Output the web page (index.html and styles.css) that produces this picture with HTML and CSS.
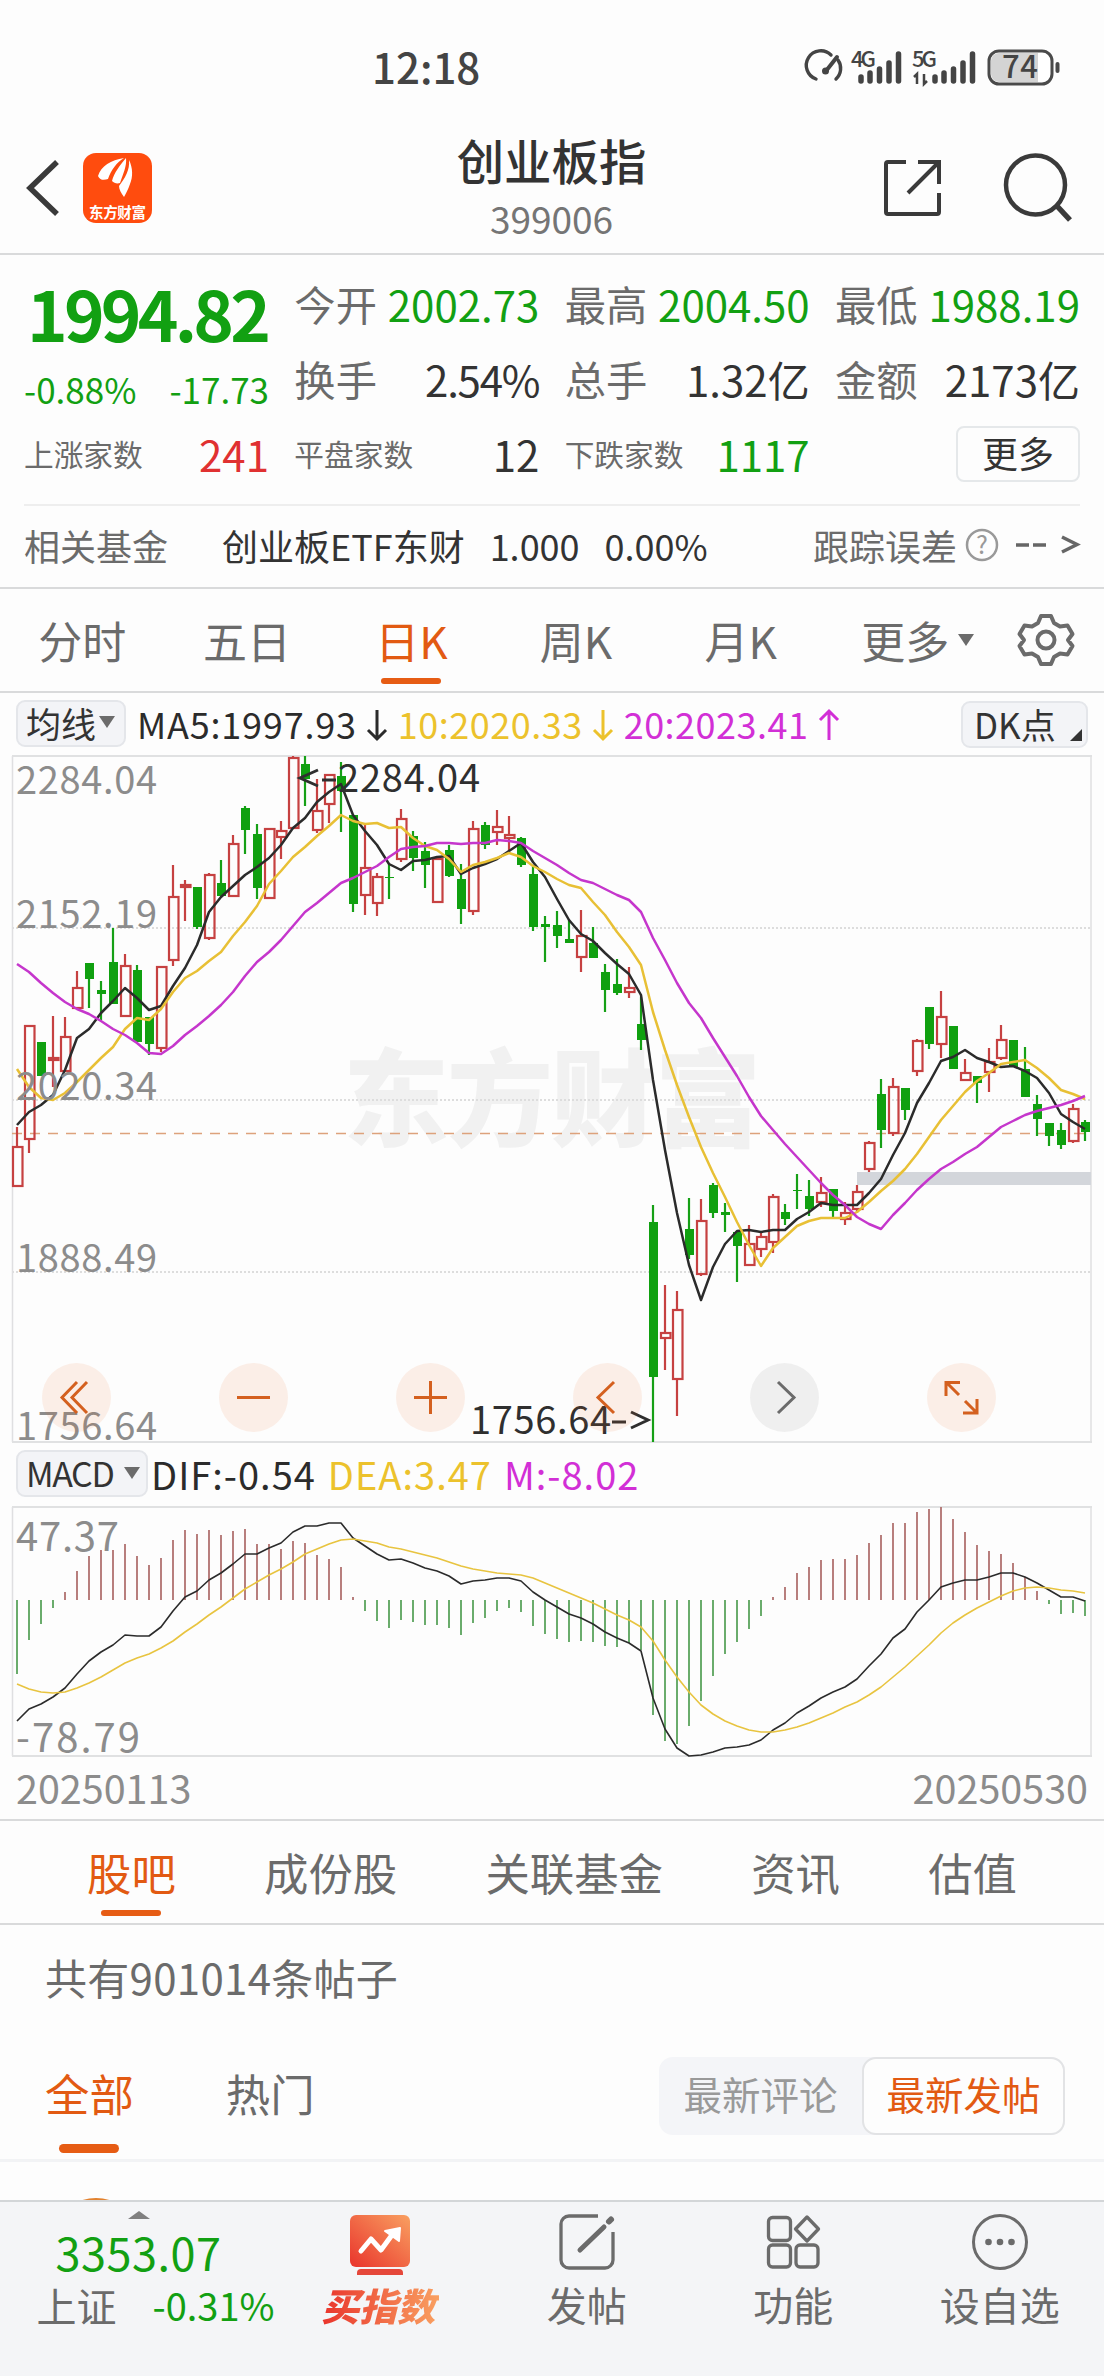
FILE: index.html
```html
<!DOCTYPE html>
<html lang="zh-CN">
    <head>
        <meta charset="utf-8">
        <title>创业板指 399006</title>
        <link rel="stylesheet" href="styles.css">
    </head>
    <body>
        <div class="status">
            <span class="clock">12:18</span>
            <svg class="status-icons" width="262" height="44" viewBox="800 46 262 44">
                <g fill="none" stroke="#444" stroke-width="3.4" stroke-linecap="round">
                    <path d="M812 79a14.500 14.500 0 1 1 15-24M834 60a14.500 14.500 0 0 1-2 19" transform="translate(4 0)"/>
                    <path d="M837 57l-11 14" stroke-width="4"/>
                </g>
                <circle cx="825.500" cy="71" r="3.500" fill="#444"/>
                <g class="net">
                    <text x="851" y="67" textLength="25">4G</text>
                    <text x="912" y="67" textLength="25">5G</text>
                </g>
                <g stroke="#444" stroke-width="5.500" stroke-linecap="round">
                    <path d="M861 77v4M870 73v8M879.500 69v12M889 63v18M898.500 54v27"/>
                    <path d="M935 77v4M944 73v8M953.500 69v12M963 63v18M972.500 54v27"/>
                </g>
                <path d="M914 77l3-3v10M924 74v10l3-3" fill="none" stroke="#444" stroke-width="2.500"/>
                <rect x="989" y="51" width="63" height="33" rx="10" fill="#fff" stroke="#4a4a4a" stroke-width="3"/>
                <path d="M999 53h39v29h-39a8 8 0 0 1-8-8v-13a8 8 0 0 1 8-8z" fill="#d4d4d4"/>
                <path d="M1057.500 64v7" stroke="#4a4a4a" stroke-width="4" stroke-linecap="round"/>
                <text class="battery" x="1002" y="78" textLength="36">74</text>
            </svg>
        </div>

        <header class="header">
            <div class="header-left">
                <svg width="36" height="60" viewBox="0 0 36 60"><path d="M33 4L6 30l27 26" fill="none" stroke="#3a3a3a" stroke-width="5.500"/></svg>
                <svg class="logo" width="69" height="70" viewBox="0 0 69 70">
                    <rect width="69" height="70" rx="13" fill="#ff4c0e"/>
                    <path d="M15 23C18 13 28 7 41 5c-7 4-13 12-16 21-3 1-8 2-10-3z" fill="#fff"/>
                    <path d="M43 5c-6 7-12 15-14 23 2 2 5 3 8 2 3-9 7-17 6-25z" fill="#fff"/>
                    <path d="M46 7c4 8 4 17 1 24-2 6-4 9-6 13-3-4-5-8-5-11 6-8 11-16 10-26z" fill="#fff"/>
                    <text x="6" y="65" textLength="57">东方财富</text>
                </svg>
            </div>
            <div class="header-title">
                <h1>创业板指</h1>
                <p>399006</p>
            </div>
            <div class="header-right">
                <svg width="60" height="60" viewBox="0 0 60 60" fill="none" stroke="#3a3a3a" stroke-width="4"><path d="M24 4H6a2 2 0 0 0-2 2v48a2 2 0 0 0 2 2h49a2 2 0 0 0 2-2V35M36 4h21v22M57 4L26 35"/></svg>
                <svg width="72" height="72" viewBox="0 0 72 72" fill="none" stroke="#3a3a3a" stroke-width="4.500"><circle cx="33.500" cy="33" r="29.500"/><path d="M55 54l13 14" stroke-width="5.500"/></svg>
            </div>
        </header>

        <section class="quote">
            <div class="quote-grid">
                <div class="cell price down">1994.82</div>
                <div class="cell"><span>今开</span><b class="down">2002.73</b></div>
                <div class="cell"><span>最高</span><b class="down">2004.50</b></div>
                <div class="cell"><span>最低</span><b class="down">1988.19</b></div>
                <div class="cell change down"><span>-0.88%</span><span>-17.73</span></div>
                <div class="cell"><span>换手</span><b class="percent">2.54%</b></div>
                <div class="cell"><span>总手</span><b>1.32亿</b></div>
                <div class="cell"><span>金额</span><b>2173亿</b></div>
                <div class="cell small"><span>上涨家数</span><b class="up">241</b></div>
                <div class="cell small"><span>平盘家数</span><b>12</b></div>
                <div class="cell small"><span>下跌家数</span><b class="down">1117</b></div>
                <div class="cell more"><button>更多</button></div>
            </div>
            <div class="fund">
                <span class="fund-label">相关基金</span>
                <span class="fund-name">创业板ETF东财</span>
                <span class="fund-value">1.000</span>
                <span>0.00%</span>
                <span class="fund-error">跟踪误差</span>
                <svg width="34" height="34" viewBox="0 0 34 34"><circle cx="17" cy="17" r="15" fill="none" stroke="#999" stroke-width="2.500"/><text x="17" y="26" text-anchor="middle">?</text></svg>
                <svg class="fund-more" width="66" height="30" viewBox="0 0 66 30" fill="none" stroke="#666" stroke-width="3.500"><path d="M2 15h13M19 15h13M48 7l15 7.500L48 22"/></svg>
            </div>
        </section>

        <nav class="period">
            <a>分时</a>
            <a>五日</a>
            <a class="active">日K</a>
            <a>周K</a>
            <a>月K</a>
            <a>更多<i class="caret"></i></a>
            <svg width="56" height="56" viewBox="-28 -28 56 56" fill="none" stroke="#6b6b6b" stroke-width="4" stroke-linejoin="round">
                <path d="M-5-24H5L8-17l6 3.500 7.500-1 5 8.500-4.500 6 4.500 6-5 8.500-7.500-1L8 17 5 24H-5L-8 17l-6-3.500-7.500 1-5-8.500 4.500-6-4.500-6 5-8.500 7.500 1L-8-17z"/>
                <circle r="8.500"/>
            </svg>
        </nav>

        <div class="indicator ma">
            <span class="chip">均线<i class="caret"></i></span>
            <span class="value ma5">MA5:1997.93</span>
            <svg class="arrow ma5" width="22" height="34" viewBox="0 0 22 34"><path d="M11 2v29M2 22l9 9 9-9"/></svg>
            <span class="value ma10">10:2020.33</span>
            <svg class="arrow ma10" width="22" height="34" viewBox="0 0 22 34"><path d="M11 2v29M2 22l9 9 9-9"/></svg>
            <span class="value ma20">20:2023.41</span>
            <svg class="arrow ma20" width="22" height="34" viewBox="0 0 22 34"><path d="M11 32V3M2 12l9-9 9 9"/></svg>
            <span class="chip dk">DK点<i class="corner"></i></span>
        </div>

        <div class="chart">
            <svg id="kline" width="1104" height="688" viewBox="0 755 1104 688">
                <text class="watermark" x="343" y="1138" textLength="418">东方财富</text>
                <g stroke="#ddd" stroke-width="2" stroke-dasharray="2 2">
                    <path d="M12 928H1091M12 1100H1091M12 1272H1091"/>
                </g>
                <path d="M12.500 756V1442M1091 756V1442" stroke="#dfdfe1" stroke-width="1.500"/>
                <path d="M12 756H1092M12 1442H1092" stroke="#e0e1e2" stroke-width="2"/>
                <rect x="857" y="1172" width="234" height="13" fill="#d3d6db"/>
                <path d="M12 1133.500H1091" stroke="#dda27c" stroke-width="1.300" stroke-dasharray="10 8"/>
                <g id="candles"></g>
                <g id="averages"></g>
                <g class="scale">
                    <text x="16" y="794" textLength="141">2284.04</text>
                    <text x="16" y="928" textLength="141">2152.19</text>
                    <text x="16" y="1100" textLength="141">2020.34</text>
                    <text x="16" y="1272" textLength="141">1888.49</text>
                    <text x="16" y="1440" textLength="141">1756.64</text>
                </g>
                <g class="extreme">
                    <path d="M318 770l-18 8 18 8M322 780h14"/>
                    <text x="338" y="792" textLength="142">2284.04</text>
                    <path d="M612 1422h14M631 1412l17 8-17 8"/>
                    <text x="470" y="1434" textLength="141">1756.64</text>
                </g>
            </svg>
            <div class="controls">
                <button><svg viewBox="0 0 69 69"><path d="M35 19L20 34.500 35 50M45 19L30 34.500 45 50"/></svg></button>
                <button><svg viewBox="0 0 69 69"><path d="M18 34.500h33"/></svg></button>
                <button><svg viewBox="0 0 69 69"><path d="M18 34.500h33M34.500 18v33"/></svg></button>
                <button><svg viewBox="0 0 69 69"><path d="M41 19L25 34.500 41 50"/></svg></button>
                <button class="disabled"><svg viewBox="0 0 69 69"><path d="M28 19l16 15.500L28 50"/></svg></button>
                <button><svg viewBox="0 0 69 69"><path d="M19 33V19.500h14M20 20l12 12M50 36v14H36M49 49L38 38"/></svg></button>
            </div>
        </div>

        <div class="indicator macd">
            <span class="chip">MACD<i class="caret"></i></span>
            <span class="ma5">DIF:-0.54</span>
            <span class="ma10">DEA:3.47</span>
            <span class="ma20">M:-8.02</span>
        </div>

        <svg id="macd" width="1104" height="251" viewBox="0 1506 1104 251">
            <path d="M12.500 1507V1756M1091 1507V1756" stroke="#dfdfe1" stroke-width="1.500"/>
            <path d="M12 1507H1092M12 1756H1092" stroke="#e0e1e2" stroke-width="2"/>
            <g class="scale">
                <text x="16" y="1551" textLength="103">47.37</text>
                <text x="16" y="1752" textLength="124">-78.79</text>
            </g>
            <g id="bars"></g>
        </svg>
        <div class="dates"><span>20250113</span><span>20250530</span></div>

        <nav class="topics">
            <a class="active">股吧</a>
            <a>成份股</a>
            <a>关联基金</a>
            <a>资讯</a>
            <a>估值</a>
        </nav>

        <section class="posts">
            <p class="count">共有901014条帖子</p>
            <div class="filter">
                <a class="active">全部</a>
                <a>热门</a>
                <div class="sort"><span>最新评论</span><span class="selected">最新发帖</span></div>
            </div>
            <div class="post"><div class="avatar"></div></div>
        </section>

        <footer class="toolbar">
            <div class="market">
                <i class="expand"></i>
                <b>3353.07</b>
                <div><span>上证</span><em>-0.31%</em></div>
            </div>
            <div class="tool buy">
                <svg width="62" height="62" viewBox="0 0 62 62">
                    <defs><linearGradient id="fire" x1="0" y1="1" x2="1" y2="0"><stop offset="0" stop-color="#e9342c"/><stop offset="1" stop-color="#f9a061"/></linearGradient></defs>
                    <rect x="1" y="2" width="60" height="52" rx="6" fill="url(#fire)"/>
                    <path d="M8 60a4 4 0 0 1 4-4h38a4 4 0 0 1 4 4v2H8z" fill="#e5473a"/>
                    <path d="M12 38l10-12 10 11 11-15" fill="none" stroke="#fff" stroke-width="5" stroke-linejoin="round" stroke-linecap="round"/>
                    <path d="M36 18l15-3-1 13z" fill="#fff" stroke="#fff" stroke-width="2" stroke-linejoin="round"/>
                </svg>
                <span>买指数</span>
            </div>
            <div class="tool">
                <svg width="62" height="62" viewBox="0 0 62 62" fill="none" stroke="#6b6b6b" stroke-width="3.300"><path d="M42 3H13a8 8 0 0 0-8 8v36a8 8 0 0 0 8 8h36a8 8 0 0 0 8-8V19"/><path d="M48 14L24 37" stroke-width="5" stroke-linecap="round"/><path d="M53 8.500L55 6.500" stroke-width="6" stroke-linecap="round"/></svg>
                <span>发帖</span>
            </div>
            <div class="tool">
                <svg width="62" height="62" viewBox="0 0 62 62" fill="none" stroke="#6b6b6b" stroke-width="3.300"><rect x="6.500" y="4.500" width="22" height="23" rx="4"/><rect x="6.500" y="32" width="22" height="22" rx="4"/><rect x="34" y="32" width="22" height="22" rx="4"/><path d="M45 4L56.500 16 45 28 33.500 16z" stroke-linejoin="round"/></svg>
                <span>功能</span>
            </div>
            <div class="tool">
                <svg width="62" height="62" viewBox="0 0 62 62"><circle cx="31" cy="29" r="26.500" fill="none" stroke="#6b6b6b" stroke-width="3"/><g fill="#6b6b6b"><circle cx="19.500" cy="29" r="3.300"/><circle cx="31" cy="29" r="3.300"/><circle cx="42.500" cy="29" r="3.300"/></g></svg>
                <span>设自选</span>
            </div>
        </footer>
        <script src="chart.js"></script>
    </body>
</html>
```

FILE: styles.css
```css
* {
    box-sizing: border-box;
}
html, body {
    margin: 0;
    padding: 0;
}
body {
    width: 1104px;
    height: 2376px;
    overflow: hidden;
    display: flex;
    flex-direction: column;
    background: #fdfdfd;
    color: #333;
    font-family: "Noto Sans CJK SC", sans-serif;
    font-size: 36px;
    line-height: 1;
}
h1, p {
    margin: 0;
}
svg {
    display: block;
    flex: none;
    overflow: visible;
}
button {
    font-family: inherit;
    padding: 0;
}
b, em, i {
    font-weight: 400;
    font-style: normal;
}
span, a, b {
    white-space: nowrap;
}
.down {
    color: #12a012;
}
.up {
    color: #e03131;
}

.status {
    height: 104px;
    padding: 46px 42px 0 372px;
    display: flex;
    justify-content: space-between;
}
.clock {
    margin-top: -1px;
    font-size: 42px;
    font-weight: 500;
    color: #444;
}
.net {
    font: 500 22px "Noto Sans CJK SC", sans-serif;
    fill: #444;
}
.battery {
    font: 500 31px "Noto Sans CJK SC", sans-serif;
    fill: #444;
}

.header {
    height: 151px;
    padding: 0 30px 0 24px;
    display: grid;
    grid-template-columns: 1fr auto 1fr;
    border-bottom: 2px solid #d9dadb;
}
.header-left, .header-right {
    display: flex;
    align-items: center;
    padding-top: 18px;
}
.header-left {
    gap: 23px;
}
.header-right {
    justify-content: flex-end;
    gap: 60px;
}
.logo text {
    font: 700 14.5px "Noto Sans CJK SC", sans-serif;
    fill: #fff;
}
.header-title {
    text-align: center;
    padding: 32px 0 0 5px;
}
.header-title h1 {
    font-size: 47.4px;
    font-weight: 500;
}
.header-title p {
    margin-top: 17px;
    font-size: 37px;
    color: #757575;
}

.quote {
    height: 334px;
    padding: 0 24px;
    border-bottom: 2px solid #d9dadb;
}
.quote-grid {
    height: 251px;
    padding-top: 12px;
    border-bottom: 2px solid #eee;
    display: grid;
    grid-template-columns: repeat(4, 245px);
    grid-template-rows: repeat(3, 75px);
    justify-content: space-between;
}
.cell {
    display: flex;
    align-items: center;
    justify-content: space-between;
    font-size: 41.3px;
    padding-bottom: 2px;
}
.cell span {
    color: #6b6b6b;
}
.cell b {
    font-size: 42px;
}
.cell .percent {
    letter-spacing: -1.2px;
}
.cell.price {
    font-size: 69px;
    font-weight: 700;
    letter-spacing: -3.8px;
    padding: 16px 0 0 3px;
}
.cell.change {
    font-size: 35px;
    padding-top: 19px;
}
.cell.change span {
    color: inherit;
}
.cell.small {
    font-size: 29.7px;
    padding-bottom: 1px;
}
.cell.more {
    justify-content: flex-end;
}
.cell.more button {
    width: 124px;
    height: 56px;
    border: 2px solid #e5e8ea;
    border-radius: 8px;
    background: #fdfdfd;
    color: #333;
    font-size: 36px;
    line-height: 46px;
    padding-bottom: 4px;
}
.fund {
    height: 78px;
    display: flex;
    align-items: center;
}
.fund-label {
    width: 198px;
    color: #6b6b6b;
}
.fund-value {
    margin: 0 25px;
}
.fund-error {
    margin: 0 8px 0 auto;
    color: #6b6b6b;
}
.fund text {
    font-size: 25px;
    fill: #999;
}
.fund-more {
    margin-left: 15px;
}

.caret {
    width: 0;
    height: 0;
    border: 8px solid transparent;
    border-top: 12px solid #6b6b6b;
    border-bottom: 0;
}
.period {
    height: 104px;
    border-bottom: 2px solid #d9dadb;
    display: grid;
    grid-template-columns: repeat(6, 164.6px) 1fr;
    align-items: center;
    justify-items: center;
    font-size: 44px;
    color: #6b6b6b;
}
.period a, .topics a, .filter a {
    height: 100%;
    display: flex;
    align-items: center;
    position: relative;
}
.period .caret {
    margin: 0 -25px 0 9px;
}
.active {
    color: #e25a12;
}
/* short bar under the selected tab */
.active::after {
    content: "";
    position: absolute;
    left: 50%;
    bottom: 7px;
    width: 60px;
    height: 6px;
    margin-left: -30px;
    border-radius: 3px;
    background: #e65c14;
}

.indicator {
    display: flex;
    align-items: center;
    padding: 0 16px;
}
.ma {
    height: 62px;
    padding-bottom: 2px;
}
.macd {
    height: 63px;
    padding-bottom: 2px;
    font-size: 38px;
}
.chip {
    height: 47px;
    border: 2px solid #e4e6ea;
    border-radius: 9px;
    background: #f3f4f7;
    display: flex;
    align-items: center;
    color: #333;
    padding-bottom: 2px;
    position: relative;
}
.ma .chip {
    width: 110px;
    padding-left: 8px;
    margin-right: 11px;
    font-size: 35px;
}
.ma .chip.dk {
    width: 127px;
    padding-left: 11px;
    margin: 2px 0 0 auto;
}
.macd .chip {
    width: 132px;
    padding-left: 8px;
    margin-right: 3px;
    font-size: 34px;
    letter-spacing: -1.4px;
}
.ma .chip .caret {
    margin-left: 3px;
}
.macd .chip .caret {
    margin-left: 11px;
}
.corner {
    position: absolute;
    right: 4px;
    bottom: 5px;
    border-left: 12px solid transparent;
    border-bottom: 12px solid #333;
}
.ma5 { color: #2b2b2b; }
.ma10 { color: #ecc22c; }
.ma20 { color: #d22fd6; }
.value {
    letter-spacing: 0.5px;
}
.value.ma5 {
    letter-spacing: 0.8px;
}
.arrow {
    margin: 3px 10px 0 9px;
    fill: none;
    stroke: currentColor;
    stroke-width: 3;
}
.macd span + span {
    margin-right: 12px;
    letter-spacing: 1px;
}

.chart {
    height: 688px;
    position: relative;
}
.watermark {
    font: 900 106px "Noto Sans CJK SC", sans-serif;
    fill: #f1f1f1;
}
.scale text {
    font-size: 38px;
    fill: #8c8c8c;
}
#macd .scale text {
    font-size: 40px;
}
.extreme {
    font-size: 38px;
    fill: #2f2f2f;
}
.extreme path {
    fill: none;
    stroke: #2f2f2f;
    stroke-width: 3;
}
/* buttons float over the candles */
.controls {
    position: absolute;
    left: 42px;
    bottom: 11px;
    display: flex;
    gap: 108px;
}
.controls button {
    width: 69px;
    height: 69px;
    border: 0;
    border-radius: 50%;
    background: rgba(240, 105, 40, 0.1);
}
.controls path {
    fill: none;
    stroke: #d4601f;
    stroke-width: 3;
}
.controls .disabled {
    background: rgba(100, 100, 100, 0.09);
}
.controls .disabled path {
    stroke: #6b6b6b;
}
.dates {
    height: 64px;
    padding: 0 16px 2px;
    border-bottom: 2px solid #d9dadb;
    display: flex;
    align-items: center;
    justify-content: space-between;
    font-size: 39.5px;
    color: #8c8c8c;
}

.topics {
    height: 104px;
    padding: 0 87px;
    border-bottom: 2px solid #d9dadb;
    display: flex;
    justify-content: space-between;
    font-size: 44.4px;
    color: #6b6b6b;
}

.posts {
    height: 275px;
    overflow: hidden;
    flex: none;
}
.count {
    padding: 31px 0 0 45px;
    font-size: 42px;
    letter-spacing: 0.3px;
    color: #6b6b6b;
}
.filter {
    height: 102px;
    margin-top: 59px;
    padding: 0 39px 0 45px;
    display: flex;
    gap: 92px;
    font-size: 44.4px;
    color: #6b6b6b;
}
.filter a {
    height: 73px;
}
.filter .active::after {
    bottom: -23px;
    height: 9px;
    border-radius: 5px;
}
.sort {
    height: 78px;
    margin-left: auto;
    display: flex;
    background: #f4f5f8;
    border-radius: 14px;
    font-size: 38.5px;
    color: #999;
}
.sort span {
    width: 203px;
    line-height: 73px;
    text-align: center;
}
.sort .selected {
    height: 78px;
    line-height: 69px;
    border: 2px solid #e2e3e5;
    border-radius: 14px;
    background: #fdfdfd;
    color: #e25a12;
}
.post {
    border-top: 3px solid #f2f3f5;
    padding: 36px 50px;
}
.avatar {
    width: 92px;
    height: 92px;
    border-radius: 50%;
    background: #e2822f;
}

.toolbar {
    height: 176px;
    flex: none;
    border-top: 2px solid #d3d6d8;
    background: #f4f5f7;
    display: flex;
    color: #6b6b6b;
    font-size: 40px;
}
.market {
    width: 277px;
    display: flex;
    flex-direction: column;
    align-items: center;
    color: #12a012;
}
.expand {
    margin-top: 9px;
    border: 11px solid transparent;
    border-bottom: 8px solid #808080;
    border-top: 0;
}
.market b {
    margin-top: 10px;
    font-size: 45px;
    letter-spacing: 0.5px;
}
.market div {
    width: 238px;
    margin: 11px 0 0 34px;
    display: flex;
    align-items: center;
    justify-content: space-between;
}
.market span {
    color: #6b6b6b;
}
.market em {
    font-size: 38px;
}
.tool {
    width: 206.5px;
    padding-top: 11px;
    display: flex;
    flex-direction: column;
    align-items: center;
    gap: 9px;
}
.buy span {
    font-size: 38px;
    font-weight: 900;
    font-style: italic;
    background: linear-gradient(90deg, #e9342c, #f9a061);
    -webkit-background-clip: text;
    background-clip: text;
    color: transparent;
    padding: 2px 4px 2px 0;
}
```

FILE: chart.js
```js
const STEP = 12;
const FIRST = 17;
const x = i => FIRST + i * STEP;

// [direction, high, body top, body bottom, low]
const candles = [
    ["r",1127,1147,1186,1186], ["r",1025,1026,1139,1153], ["g",1042,1042,1076,1076], ["r",1016,1058,1060,1087], ["r",1017,1037,1071,1071],
    ["r",971,988,1008,1008], ["g",963,963,979,1008], ["g",981,990,994,1020], ["g",928,962,1004,1004], ["r",954,966,1016,1016],
    ["g",965,970,1042,1042], ["g",1017,1017,1044,1055], ["r",967,967,1048,1052], ["r",865,897,960,966], ["r",880,885,887,921],
    ["g",887,887,927,929], ["r",873,875,938,940], ["g",860,883,896,896], ["r",835,844,896,896], ["g",806,808,830,854],
    ["g",824,834,888,899], ["r",828,829,898,898], ["r",821,831,837,859], ["r",756,758,828,828], ["g",756,764,779,806],
    ["r",779,811,830,833], ["r",774,775,804,823], ["g",762,776,791,832], ["g",815,815,904,912], ["r",823,868,895,915],
    ["r",873,877,903,916], ["g",865,877,878,899], ["r",809,819,859,862], ["g",831,836,858,871], ["g",842,851,865,888],
    ["r",858,859,902,902], ["g",845,850,876,877], ["g",864,879,909,924], ["r",821,829,911,915], ["g",822,825,845,849],
    ["r",810,827,832,845], ["r",816,835,838,852], ["g",837,838,865,867], ["g",865,874,927,931], ["g",916,924,927,962],
    ["g",911,925,936,948], ["g",920,939,943,943], ["r",910,936,957,972], ["g",927,943,958,958], ["g",964,972,990,1012],
    ["g",959,984,993,995], ["r",967,988,992,998], ["g",997,1024,1040,1050], ["g",1205,1222,1377,1442], ["r",1285,1333,1338,1370],
    ["r",1291,1310,1379,1416], ["g",1198,1229,1255,1259], ["r",1199,1221,1274,1276], ["g",1183,1185,1213,1218], ["g",1203,1212,1215,1232],
    ["g",1232,1232,1246,1282], ["r",1225,1244,1265,1265], ["r",1233,1237,1249,1257], ["r",1194,1197,1242,1253], ["g",1204,1212,1219,1225],
    ["g",1174,1190,1191,1209], ["g",1180,1196,1209,1216], ["r",1177,1193,1202,1207], ["g",1189,1189,1211,1217], ["r",1202,1213,1219,1225],
    ["r",1185,1192,1209,1213], ["r",1141,1143,1169,1172], ["g",1079,1094,1130,1148], ["r",1078,1087,1133,1136], ["g",1088,1088,1110,1120],
    ["r",1039,1041,1071,1076], ["g",1007,1007,1044,1049], ["r",991,1017,1044,1058], ["g",1026,1026,1069,1069], ["r",1059,1073,1080,1080],
    ["g",1076,1076,1083,1103], ["r",1048,1062,1072,1092], ["r",1025,1040,1058,1060], ["g",1040,1040,1067,1067], ["g",1047,1069,1097,1097],
    ["g",1095,1104,1119,1136], ["g",1123,1123,1136,1146], ["g",1123,1130,1145,1149], ["r",1104,1109,1141,1143], ["g",1120,1122,1132,1141]
];

const ma5 = [1125,1112,1105,1095,1070,1038,1029,1013,1001,988,998,1010,1006,986,968,945,912,897,886,875,867,858,845,828,818,802,792,784,815,831,
    845,864,870,861,860,857,856,874,868,864,859,851,843,862,877,899,920,934,941,953,964,974,995,1080,1150,1213,1265,1300,1267,1244,
    1231,1230,1232,1230,1230,1219,1212,1203,1205,1205,1205,1193,1179,1155,1133,1103,1083,1061,1057,1050,1058,1062,1067,1066,1071,1078,1093,1114,1122,1129];
const ma10 = [1069,1087,1098,1100,1093,1082,1070,1058,1047,1029,1018,1020,1009,992,978,971,961,952,936,922,906,884,871,857,847,836,826,815,821,824,
    823,828,827,838,846,850,859,872,865,862,858,853,857,866,872,879,885,888,902,915,932,947,965,1012,1050,1085,1117,1147,1173,1197,
    1222,1245,1266,1248,1237,1226,1221,1218,1218,1218,1212,1202,1191,1181,1169,1154,1137,1120,1106,1092,1081,1073,1064,1062,1060,1068,1078,1090,1094,1099];
const ma20 = [964,972,983,993,1002,1009,1014,1021,1029,1035,1043,1053,1054,1046,1035,1026,1016,1005,992,976,962,952,940,926,912,903,893,883,878,872,
    866,857,849,847,846,843,843,844,843,843,840,841,843,851,858,865,873,880,883,889,895,900,912,938,960,983,1003,1018,1038,1057,
    1076,1097,1116,1130,1144,1157,1170,1183,1195,1205,1217,1224,1229,1215,1203,1190,1179,1169,1162,1154,1147,1137,1127,1121,1115,1111,1108,1105,1101,1096];

const macd = [1674,1640,1624,1608,1592,1571,1556,1550,1550,1544,1556,1565,1558,1540,1530,1534,1530,1535,1531,1529,1544,1544,1549,1541,1543,1555,1559,1567,1597,1611,
    1621,1628,1620,1622,1625,1625,1628,1635,1623,1618,1611,1608,1612,1626,1634,1639,1642,1641,1642,1646,1647,1643,1650,1715,1741,1744,1726,1701,1676,1654,
    1642,1629,1616,1597,1587,1573,1567,1560,1559,1559,1555,1543,1535,1523,1523,1512,1509,1507,1519,1532,1545,1551,1554,1563,1577,1591,1604,1614,1613,1616];
const dif = [1721,1709,1704,1697,1688,1674,1661,1652,1645,1635,1636,1636,1627,1611,1597,1591,1580,1573,1564,1554,1554,1548,1543,1532,1526,1526,1523,1523,1538,1546,
    1554,1560,1559,1563,1568,1571,1576,1584,1581,1580,1578,1578,1581,1592,1600,1607,1614,1618,1624,1632,1638,1643,1651,1698,1729,1748,1756,1755,1752,1748,
    1747,1745,1740,1730,1723,1713,1706,1698,1692,1687,1679,1666,1654,1638,1629,1612,1600,1587,1583,1580,1580,1577,1573,1573,1577,1583,1590,1597,1597,1601];
const dea = [1684,1689,1692,1693,1692,1688,1683,1677,1670,1663,1658,1654,1648,1641,1632,1624,1615,1607,1598,1589,1582,1575,1569,1562,1554,1549,1544,1540,1539,1541,
    1543,1547,1549,1552,1555,1558,1562,1566,1569,1571,1573,1574,1575,1578,1583,1588,1593,1598,1603,1609,1615,1620,1627,1641,1660,1677,1692,1705,1714,1721,
    1726,1730,1732,1732,1730,1727,1723,1718,1713,1707,1702,1695,1687,1677,1667,1656,1645,1633,1623,1615,1608,1602,1596,1591,1588,1587,1588,1590,1591,1593];

function line(values, color, width) {
    const points = values.map((y, i) => `${x(i)},${y}`).join(" ");
    return `<polyline points="${points}" fill="none" stroke="${color}" stroke-width="${width}" stroke-linejoin="round"/>`;
}

function drawCandle([dir, high, top, bottom, low], i) {
    const cx = x(i);
    if (dir === "g") {
        return `<path d="M${cx} ${high}V${low}" stroke="#16a016" stroke-width="2.2"/>` +
            `<rect x="${cx - 4}" y="${top}" width="9" height="${bottom - top}" fill="#10a010"/>`;
    }
    return `<path d="M${cx} ${high}V${top}M${cx} ${bottom}V${low}" stroke="#c64141" stroke-width="2.2"/>` +
        `<rect x="${cx - 4}" y="${top}" width="9.500" height="${Math.max(bottom - top, 1)}" fill="none" stroke="#c64141" stroke-width="2.2"/>`;
}

document.getElementById("candles").innerHTML = candles.map(drawCandle).join("");
document.getElementById("averages").innerHTML =
    line(ma5, "#2b2b2b", 2.5) + line(ma10, "#e8c035", 2.5) + line(ma20, "#c536cc", 2.5);

const zero = 1600;
document.getElementById("bars").innerHTML =
    macd.map((y, i) => `<path d="M${x(i)} ${zero}V${y}" stroke="${y > zero ? "#5aa35c" : "#b0716f"}" stroke-width="1.800"/>`).join("") +
    line(dif, "#2b2b2b", 1.6) + line(dea, "#e8c440", 1.6);
```
